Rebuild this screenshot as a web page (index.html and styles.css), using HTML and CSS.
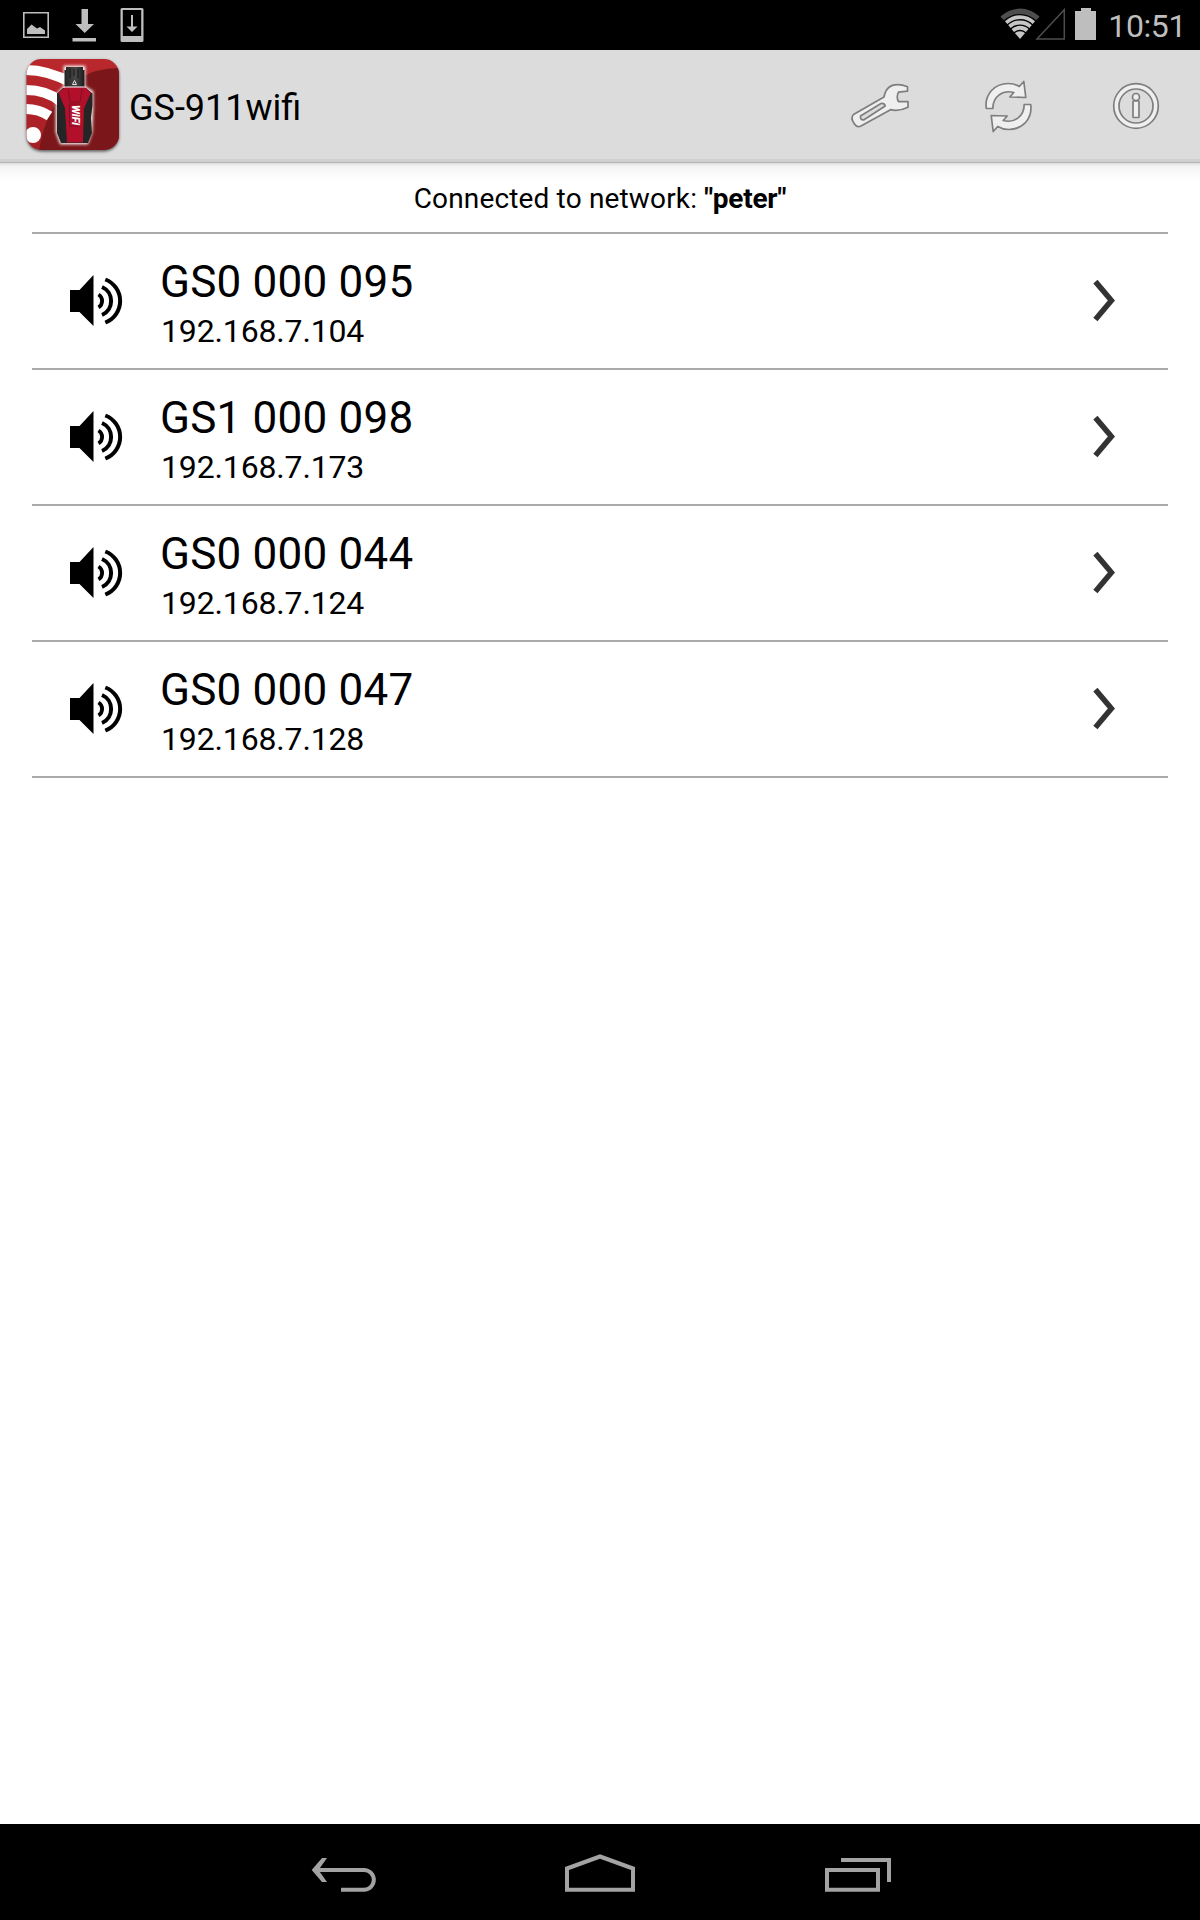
FILE: index.html
```html
<!DOCTYPE html>
<html lang="en">
<head>
<meta charset="utf-8">
<title>GS-911wifi</title>
<link rel="stylesheet" href="styles.css">
</head>
<body>
<svg class="symbols" width="0" height="0" aria-hidden="true">
  <symbol id="speaker" viewBox="66 271 60 60">
    <path d="M70 290h9.500l14-15v51l-14-14H70z"/>
    <g fill="none" stroke="#000">
      <path stroke-width="3.800" d="M98.500 294.500a7.500 7.500 0 0 1 0 12.800"/>
      <path stroke-width="4" d="M102 287a15.300 15.300 0 0 1 0 28"/>
      <path stroke-width="4" d="M105.300 279.500a23 23 0 0 1 0 43"/>
    </g>
  </symbol>
  <symbol id="chevron" viewBox="1090 276 30 50">
    <path fill="none" stroke="#333" stroke-width="5.500" d="M1095.400 281.600l16 18.900-16 19.100"/>
  </symbol>
</svg>
<div class="screen">
  <header class="status">
    <svg width="160" height="50" viewBox="0 0 160 50">
      <g fill="#bebebe">
        <path fill-rule="evenodd" d="M23 12h26v26H23zM24.600 13.600v22.800h22.800V13.600z"/>
        <path d="M27 34v-5l4.500-4.500 5.500 4 3-1.500 5 3.500V34z"/>
        <path d="M81.500 9h6.500v15h6L84.700 33 75.500 24h6zM72.500 38H96v3.500H72.500z"/>
        <path fill-rule="evenodd" d="M122 8h20q1.500 0 1.500 1.500v31q0 1.500-1.500 1.500h-20q-1.500 0-1.500-1.500v-31q0-1.500 1.500-1.500zm.8 2v26h18.400V10z"/>
        <path d="M131 15h2v11.500h4.500L132 32l-5.500-5.500h4.500z"/>
      </g>
    </svg>
    <div class="status-right">
      <svg width="108" height="50" viewBox="996 0 108 50">
        <path fill="#4d4d4d" d="M1000.500 16.500a28 28 0 0 1 39 0L1020 39z"/>
        <path fill="#000" d="M1003.500 20.500a24 24 0 0 1 33 0L1020 40z"/>
        <path fill="#c6c6c6" d="M1005 21.200a21.600 21.600 0 0 1 30 0L1020 39z"/>
        <g fill="none" stroke="#000" stroke-width="1.300"><path d="M1007 25.300a18 18 0 0 1 26 0M1010.500 29a13.500 13.500 0 0 1 19 0M1014 33a8.500 8.500 0 0 1 12 0"/></g>
        <path fill="none" stroke="#4d4d4d" stroke-width="1.500" d="M1037 39L1064.300 9.700V39z"/>
        <path fill="#bebebe" d="M1081 8h10v3h5v29h-21V11h6z"/>
      </svg>
      <span class="clock">10:51</span>
    </div>
  </header>
  <div class="appbar">
    <svg class="logo" width="104" height="104" viewBox="20 54 104 104">
      <defs>
        <clipPath id="tile"><rect x="26.500" y="59" width="92.500" height="91" rx="15"/></clipPath>
        <linearGradient id="red" x2="0" y2="1"><stop stop-color="#b9282d"/><stop offset="1" stop-color="#a61f25"/></linearGradient>
        <linearGradient id="plug"><stop stop-color="#222"/><stop offset=".55" stop-color="#484848"/><stop offset="1" stop-color="#1b1b1b"/></linearGradient>
        <filter id="soft" x="-30%" y="-20%" width="160%" height="140%"><feGaussianBlur stdDeviation="1.400"/></filter>
      </defs>
      <rect x="26.500" y="60.500" width="92.500" height="91" rx="15" fill="#555" filter="url(#soft)"/>
      <g clip-path="url(#tile)">
        <path fill="url(#red)" d="M26 59h94v92H26z"/>
        <path fill="#7b171a" d="M39 151C45 111 66 80 96 71q12-3 24-3v83z"/>
        <g fill="none" stroke="#fff" stroke-width="10">
          <path d="M26 70q22 0 46 13"/>
          <path d="M26 90q20 0 34 11"/>
          <path d="M26 109q13 0 23.500 7"/>
        </g>
        <circle cx="33" cy="135" r="8" fill="#fff"/>
      </g>
      <path fill="#fff" stroke="#fff" stroke-width="2.500" filter="url(#soft)" d="M65 67h19v20l8 5v16l-1 24-4 11H61l-4-11V95l8-8z"/>
      <path fill="#252525" d="M63 88h23l6.500 5.500v12L91 118l1 15-4 10H61l-4-10V93.500z"/>
      <path fill="#b20f2b" d="M65 87.500h20l6 5-7 16-1 34H67l-2-34-6.500-16z"/>
      <path fill="none" stroke="#820e22" d="M68 89l2 13h10l2-13M69.500 104v22h10v-22z"/>
      <path fill="url(#plug)" d="M66 67h17v3h1.500v16.500h-20V70H66z"/>
      <path stroke="#191919" d="M70 69v9m4-9v7m4-7v9"/>
      <path fill="none" stroke="#ddd" d="M72.500 84.500l2-4 2 4z"/>
      <text class="logo-label" transform="translate(71.500 105) rotate(90)" textLength="20" lengthAdjust="spacingAndGlyphs">WiFi</text>
    </svg>
    <h1>GS-911wifi</h1>
    <svg class="tools" width="350" height="109" viewBox="830 50 350 109">
      <g fill="#efefef" stroke="#7e7e7e" stroke-width="1.700" stroke-linejoin="round">
        <path d="M853.500 114.500L884 97c1.500-8 6.500-12.300 13.500-12.300q5 0 10 2v4.500l-9 1q-2.500 5 0 9.500h9.500v5.500q-9 4.500-17.500 2.500L861 126q-4 2-6.500-2-4.500-6-1-9.500z"/>
        <path fill="#dcdcdc" d="M860.500 116L881 103.500q3.500-.5 4.200 2.500L864 119.800q-4 .5-3.500-3.800z"/>
        <path d="M986.300 108.500c-2-14 8-25 22-25q6 0 11 3l4.500-5 2 16-16-.5 4-4.500c-11-3-21 4-21 16z"/>
        <path d="M1030.700 104.500c2 14-8 25-22 25q-6 0-11-3l-4.500 5-2-16 16 .5-4 4.500c11 3 21-4 21-16z"/>
        <circle cx="1136" cy="106" r="22.300"/>
        <circle cx="1136" cy="106" r="17" fill="#dcdcdc"/>
        <circle cx="1136" cy="97" r="3.500"/>
        <rect x="1133" y="101" width="6" height="16.500" rx=".5"/>
      </g>
    </svg>
  </div>
  <main>
    <p class="network">Connected to network: <b>"peter"</b></p>
    <ul>
      <li><svg class="speaker"><use href="#speaker"/></svg><div class="device"><strong>GS0 000 095</strong><span>192.168.7.104</span></div><svg class="chevron"><use href="#chevron"/></svg></li>
      <li><svg class="speaker"><use href="#speaker"/></svg><div class="device"><strong>GS1 000 098</strong><span>192.168.7.173</span></div><svg class="chevron"><use href="#chevron"/></svg></li>
      <li><svg class="speaker"><use href="#speaker"/></svg><div class="device"><strong>GS0 000 044</strong><span>192.168.7.124</span></div><svg class="chevron"><use href="#chevron"/></svg></li>
      <li><svg class="speaker"><use href="#speaker"/></svg><div class="device"><strong>GS0 000 047</strong><span>192.168.7.128</span></div><svg class="chevron"><use href="#chevron"/></svg></li>
    </ul>
  </main>
  <nav>
    <svg width="640" height="96" viewBox="280 1824 640 96">
      <g fill="none" stroke="#a3a3a3" stroke-width="4">
        <path d="M315 1870h49a9.850 9.850 0 0 1 0 19.700H341"/>
        <path fill="#a3a3a3" stroke="none" d="M322 1858h5l-8.500 12 8.500 12h-5l-10.300-12z"/>
        <path d="M567 1868.500l33-12 33 12v21.200h-66z"/>
        <path d="M827 1870h51v19.700h-51zM841 1860h48v22"/>
      </g>
    </svg>
  </nav>
</div>
</body>
</html>
```
FILE: styles.css
```css
* { box-sizing: border-box; }
body { margin: 0; font-family: Roboto, sans-serif; color: #000; background: #fff; }
.symbols { display: block; }
.screen { width: 1200px; height: 1920px; display: flex; flex-direction: column; }
svg { display: block; flex: none; }
.status { height: 50px; background: #000; display: flex; justify-content: space-between; }
.status-right { display: flex; padding-right: 14px; }
.clock { width: 82px; text-align: right; font-size: 32px; line-height: 52px; letter-spacing: -0.4px; color: #bebebe; }
.appbar { height: 113px; background: #dcdcdc; display: flex; align-items: flex-start; padding: 0 20px; border-bottom: 1px solid #b5b5b5; box-shadow: inset 0 -3px #d0d0d0; }
.logo { margin-top: 4px; }
.logo-label { fill: #fff; font-size: 10px; font-weight: 900; font-style: italic; }
h1 { margin: 0; padding-left: 5px; flex: 1; font-size: 36px; font-weight: 400; line-height: 117px; }
main { flex: 1; padding: 0 32px; background: linear-gradient(#dedede 0, #f2f2f2 3px, #f8f8f8 8px, #fff 18px); }
.network { margin: 0; height: 69px; line-height: 72px; font-size: 28px; letter-spacing: 0.16px; text-align: center; }
.network b { letter-spacing: -0.2px; }
ul { list-style: none; margin: 0; padding: 0; border-top: 2px solid #aaa; }
li { height: 136px; border-bottom: 2px solid #aaa; display: flex; align-items: center; padding: 0 48px 0 34px; }
.speaker { width: 60px; height: 60px; }
.device { flex: 1; padding: 8px 0 0 34px; display: flex; flex-direction: column; }
.device strong { font-size: 44px; font-weight: 400; line-height: 52px; letter-spacing: 0.22px; }
.device span { font-size: 32px; line-height: 46px; padding-left: 1px; letter-spacing: -0.15px; }
.chevron { width: 30px; height: 50px; }
nav { height: 96px; background: #000; display: flex; justify-content: center; }
```
